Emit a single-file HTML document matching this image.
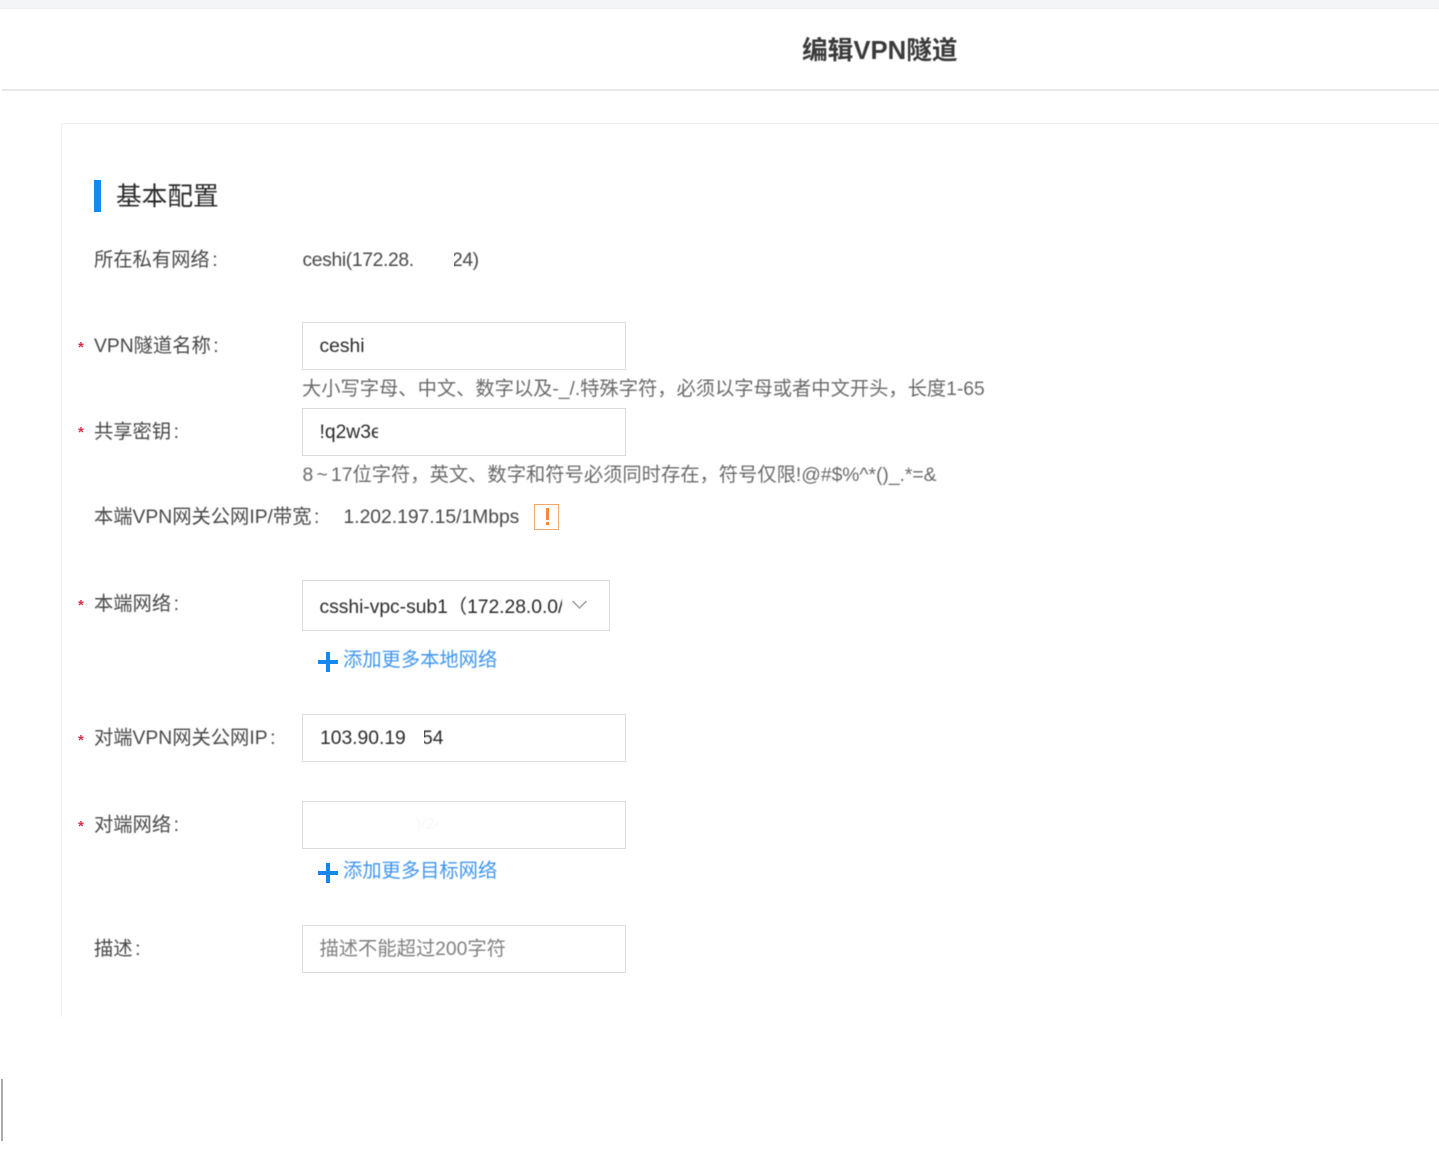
<!DOCTYPE html>
<html lang="zh-CN">
<head>
<meta charset="utf-8">
<title>编辑VPN隧道</title>
<style>
html,body{margin:0;padding:0;background:#fff}
body{width:1439px;height:1150px;overflow:hidden;position:relative;font-family:"Liberation Sans","Noto Sans CJK SC",sans-serif;color:#484848;font-size:19.3px}
.a{position:absolute;white-space:nowrap;line-height:24px;filter:blur(.4px)}
.a i{font-style:normal;margin-left:2.5px}
.b{position:absolute;background:#fff;border:1.5px solid #dcdcdc;box-sizing:border-box}
.s{position:absolute;color:#d9304f;font-size:15px;font-weight:700;line-height:14px;left:78px;filter:blur(.3px)}
.v{color:#2a2a2a}
.h{color:#6a6a6a}
.l{color:#4096ee}
.m{position:absolute;background:#fff}
</style>
</head>
<body>
<div style="position:absolute;left:0;top:0;width:1439px;height:8px;background:#f4f5f6;border-bottom:1px solid #eceef0;box-sizing:content-box"></div>
<div style="position:absolute;left:2px;top:89px;width:1437px;height:1.5px;background:#e8e8e8"></div>
<div class="a" style="left:802px;top:37px;font-size:25.7px;line-height:28px;font-weight:700;color:#3a3a3a">编辑VPN隧道</div>

<div style="position:absolute;left:61px;top:123px;width:1378px;height:894px;border-left:1.5px solid #f0f0f0;border-top:1.5px solid #f0f0f0;box-sizing:border-box"></div>

<div style="position:absolute;left:94px;top:180px;width:7px;height:32px;background:#1488ee"></div>
<div class="a" style="left:116px;top:181px;font-size:25.7px;line-height:32px;color:#2a2a2a">基本配置</div>

<div class="a" style="left:94px;top:248.5px">所在私有网络<i>:</i></div>
<div class="a" style="left:302.5px;top:248.5px;letter-spacing:-.35px;width:111px;overflow:hidden">ceshi(172.28.</div>
<div class="a" style="left:452px;top:248.5px;letter-spacing:-.4px">24)</div>
<div class="m" style="left:450px;top:250px;width:4px;height:20px"></div>

<div class="s" style="top:341px">*</div>
<div class="a" style="left:94px;top:335px">VPN隧道名称<i>:</i></div>
<div class="b" style="left:302px;top:322px;width:323.5px;height:48px"></div>
<div class="a v" style="left:319.5px;top:335px">ceshi</div>
<div class="a h" style="left:302px;top:378px;letter-spacing:-.02px">大小写字母、中文、数字以及-_/.特殊字符，必须以字母或者中文开头，长度1-65</div>

<div class="s" style="top:426px">*</div>
<div class="a" style="left:94px;top:420.5px">共享密钥<i>:</i></div>
<div class="b" style="left:302px;top:408px;width:323.5px;height:48px"></div>
<div class="a v" style="left:319.5px;top:420.5px;width:58px;overflow:hidden">!q2w3e4r</div>
<div class="a h" style="left:302.5px;top:464px;word-spacing:-2.1px">8 ~ 17位字符，英文、数字和符号必须同时存在，符号仅限!@#$%^*()_.*=&amp;</div>

<div class="a" style="left:94px;top:506px">本端VPN网关公网IP/带宽<i>:</i></div>
<div class="a" style="left:343.5px;top:506px">1.202.197.15/1Mbps</div>
<div style="position:absolute;left:534px;top:504px;width:25px;height:26px;border:1.5px solid #f5a868;box-sizing:border-box"></div>
<div style="position:absolute;left:545.5px;top:508px;width:3px;height:12px;background:#f08a3c"></div>
<div style="position:absolute;left:545.5px;top:522px;width:3px;height:3px;background:#f08a3c"></div>

<div class="s" style="top:599px">*</div>
<div class="a" style="left:94px;top:592.5px">本端网络<i>:</i></div>
<div class="b" style="left:302px;top:580px;width:307.5px;height:50.5px"></div>
<div class="a v" style="left:319.5px;top:596px;width:242px;overflow:hidden;letter-spacing:-.02px">csshi-vpc-sub1（172.28.0.0/24）</div>
<svg style="position:absolute;left:571px;top:599px" width="18" height="12" viewBox="0 0 18 12"><path d="M1.5 2 L8.5 9 L15.5 2" fill="none" stroke="#aaa" stroke-width="1.6"/></svg>

<div style="position:absolute;left:318px;top:660px;width:20px;height:3.5px;background:#1488ee"></div>
<div style="position:absolute;left:326.3px;top:652px;width:3.5px;height:20px;background:#1488ee"></div>
<div class="a l" style="left:343px;top:649px">添加更多本地网络</div>

<div class="s" style="top:734px">*</div>
<div class="a" style="left:94px;top:727px">对端VPN网关公网IP<i>:</i></div>
<div class="b" style="left:302px;top:714px;width:323.5px;height:48px"></div>
<div class="a v" style="left:320px;top:727px">103.90.19</div>
<div class="a v" style="left:422px;top:727px">54</div>
<div class="m" style="left:420px;top:729px;width:4px;height:20px"></div>

<div class="s" style="top:820px">*</div>
<div class="a" style="left:94px;top:813.5px">对端网络<i>:</i></div>
<div class="b" style="left:302px;top:801px;width:323.5px;height:48px"></div>
<div class="a" style="left:416px;top:813px;color:#f7f7f7;font-size:16px;width:22px;overflow:hidden">)/24</div>

<div style="position:absolute;left:318px;top:871px;width:20px;height:3.5px;background:#1488ee"></div>
<div style="position:absolute;left:326.3px;top:863px;width:3.5px;height:20px;background:#1488ee"></div>
<div class="a l" style="left:343px;top:860px">添加更多目标网络</div>

<div class="a" style="left:94px;top:938px">描述<i>:</i></div>
<div class="b" style="left:302px;top:925px;width:323.5px;height:48px"></div>
<div class="a" style="left:319.5px;top:938px;color:#808080">描述不能超过200字符</div>

<div style="position:absolute;left:1px;top:1079px;width:1.5px;height:62px;background:#aaa"></div>
</body>
</html>
